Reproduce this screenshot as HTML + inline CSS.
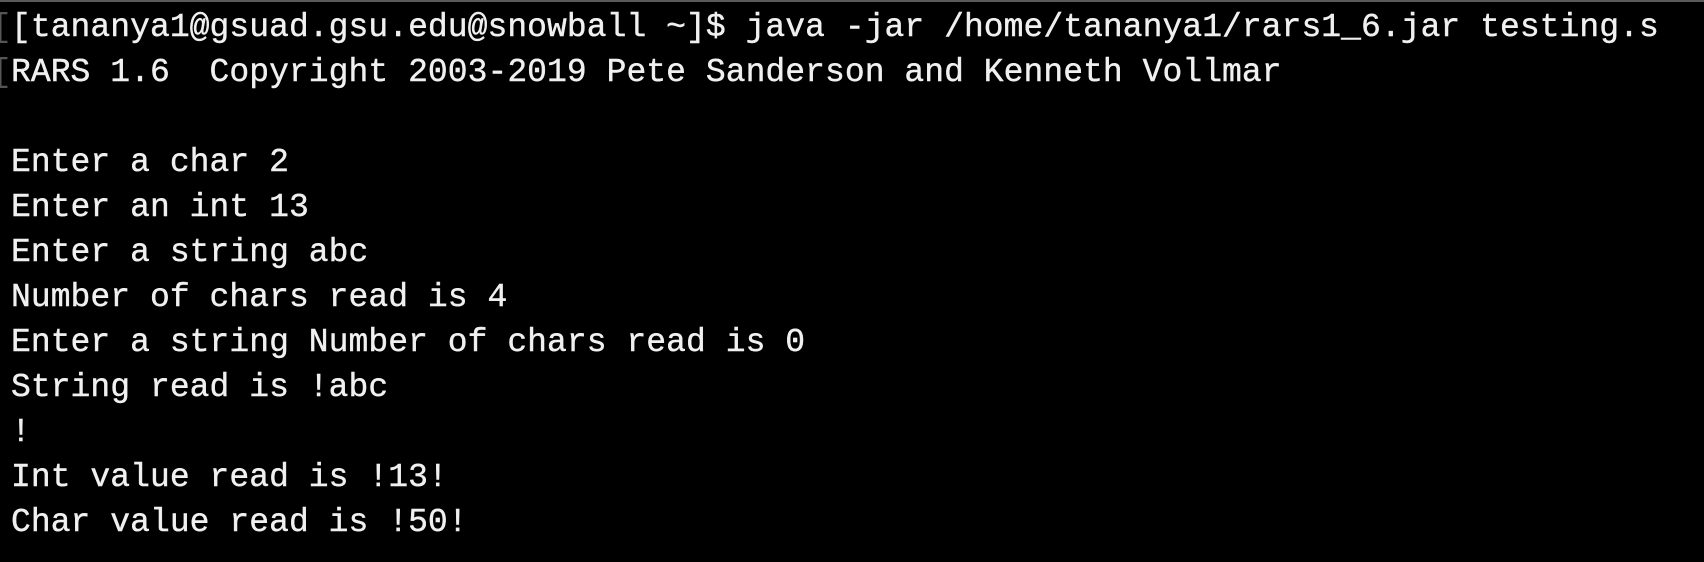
<!DOCTYPE html>
<html><head><meta charset="utf-8"><style>
html,body{margin:0;padding:0;background:#000;width:1704px;height:562px;overflow:hidden}
.bar{position:absolute;left:0;top:0;width:1704px;height:2px;background:#5a5a5a}
pre{position:absolute;left:11px;top:5px;margin:0;font-family:"Liberation Mono",monospace;font-size:33px;line-height:45px;color:#f0f0f0;letter-spacing:0.05px;-webkit-text-stroke:0.4px #f0f0f0}
.f{position:absolute;left:0;color:#555;font-family:"Liberation Mono",monospace;font-size:33px;line-height:45px}
</style></head><body>
<div class="bar"></div>
<div class="f" style="top:5px;left:-8px">[</div>
<div class="f" style="top:50px;left:-8px">[</div>
<pre>[tananya1@gsuad.gsu.edu@snowball ~]$ java -jar /home/tananya1/rars1_6.jar testing.s
RARS 1.6  Copyright 2003-2019 Pete Sanderson and Kenneth Vollmar

Enter a char 2
Enter an int 13
Enter a string abc
Number of chars read is 4
Enter a string Number of chars read is 0
String read is !abc
!
Int value read is !13!
Char value read is !50!</pre>
</body></html>
